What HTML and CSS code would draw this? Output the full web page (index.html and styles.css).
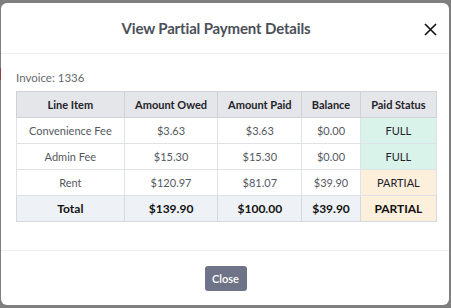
FILE: index.html
```html
<!DOCTYPE html>
<html>
<head>
<meta charset="utf-8">
<link rel="stylesheet" href="styles.css">
</head>
<body>
<div class="backdrop-mark"></div>
<div class="modal">
  <div class="modal-header">
    <h2 class="modal-title">View Partial Payment Details</h2>
    <button class="close-x" aria-label="Close">
      <svg width="13" height="13" viewBox="0 0 13 13"><path d="M1 1L12 12M12 1L1 12" stroke="#111" stroke-width="1.6" fill="none"/></svg>
    </button>
  </div>
  <div class="modal-body">
    <div class="invoice">Invoice: 1336</div>
    <table class="pay-table">
      <thead>
        <tr><th class="c1">Line Item</th><th class="c2">Amount Owed</th><th class="c3">Amount Paid</th><th class="c4">Balance</th><th class="c5">Paid Status</th></tr>
      </thead>
      <tbody>
        <tr><td>Convenience Fee</td><td>$3.63</td><td>$3.63</td><td>$0.00</td><td class="full">FULL</td></tr>
        <tr><td>Admin Fee</td><td>$15.30</td><td>$15.30</td><td>$0.00</td><td class="full">FULL</td></tr>
        <tr><td>Rent</td><td>$120.97</td><td>$81.07</td><td>$39.90</td><td class="partial">PARTIAL</td></tr>
        <tr class="total"><td>Total</td><td>$139.90</td><td>$100.00</td><td>$39.90</td><td class="partial">PARTIAL</td></tr>
      </tbody>
    </table>
  </div>
  <div class="modal-footer">
    <button class="btn-close">Close</button>
  </div>
</div>
</body>
</html>
```
FILE: styles.css
```css
html, body { margin: 0; padding: 0; }
body {
  background: #7f7f7f;
  width: 451px;
  height: 308px;
  overflow: hidden;
  font-family: "Lato", "Noto Sans", sans-serif;
  position: relative;
}
.backdrop-mark {
  position: absolute;
  left: 0; top: 68px;
  width: 1px; height: 12px;
  background: #8a4545;
}
.modal {
  margin: 3px 2px 0 1px;
  width: 448px;
  height: 302px;
  background: #fff;
  border-radius: 6px;
  display: flex;
  flex-direction: column;
  overflow: hidden;
}
.modal-header {
  height: 50px;
  border-bottom: 1px solid #eceef3;
  display: flex;
  align-items: center;
  justify-content: center;
  padding-right: 18px;
  position: relative;
  box-sizing: content-box;
}
.modal-title {
  margin: 0;
  font-size: 15px;
  font-weight: 700;
  color: #4b4f58;
  letter-spacing: -0.15px;
}
.close-x {
  position: absolute;
  right: 12px;
  top: 19px;
  border: 0;
  background: none;
  padding: 0;
  width: 14px;
  height: 14px;
  display: flex;
  align-items: center;
  justify-content: center;
}
.modal-body {
  height: 197px;
  padding: 15px 12px 0 15px;
  border-bottom: 1px solid #eceef3;
  box-sizing: border-box;
}
.invoice {
  font-size: 11.5px;
  color: #666a70;
  height: 22px;
  line-height: 17px;
}
.pay-table {
  border-collapse: collapse;
  width: 421px;
  font-size: 11px;
  color: #55595f;
}
.pay-table th, .pay-table td {
  border: 1px solid #dfe2e7;
  height: 25px;
  padding: 0;
  text-align: center;
}
.pay-table th {
  background: #e4e6ea;
  color: #1f2328;
  font-weight: 700;
  border-color: #cfd3d9;
}
.c1 { width: 108px; }
.c2 { width: 94px; }
.c3 { width: 84px; }
.c4 { width: 58px; }
.c5 { width: 76px; }
.pay-table td.full { background: #d9f3ea; color: #1f2328; }
.pay-table td.partial { background: #fcefdc; color: #1f2328; }
.pay-table tr.total td {
  background: #eef1f5;
  font-weight: 700;
  font-size: 12px;
  color: #111;
  border-color: #d5d9df;
}
.pay-table tr.total td.partial { background: #fcefdc; }
.modal-footer {
  flex: 1;
  display: flex;
  justify-content: center;
  padding-top: 15px;
  padding-left: 1px;
}
.btn-close {
  width: 42px;
  height: 25px;
  background: #6f7388;
  color: #fff;
  border: 0;
  border-radius: 3px;
  font-family: inherit;
  font-size: 11px;
  font-weight: 600;
  padding: 0;
}
```
